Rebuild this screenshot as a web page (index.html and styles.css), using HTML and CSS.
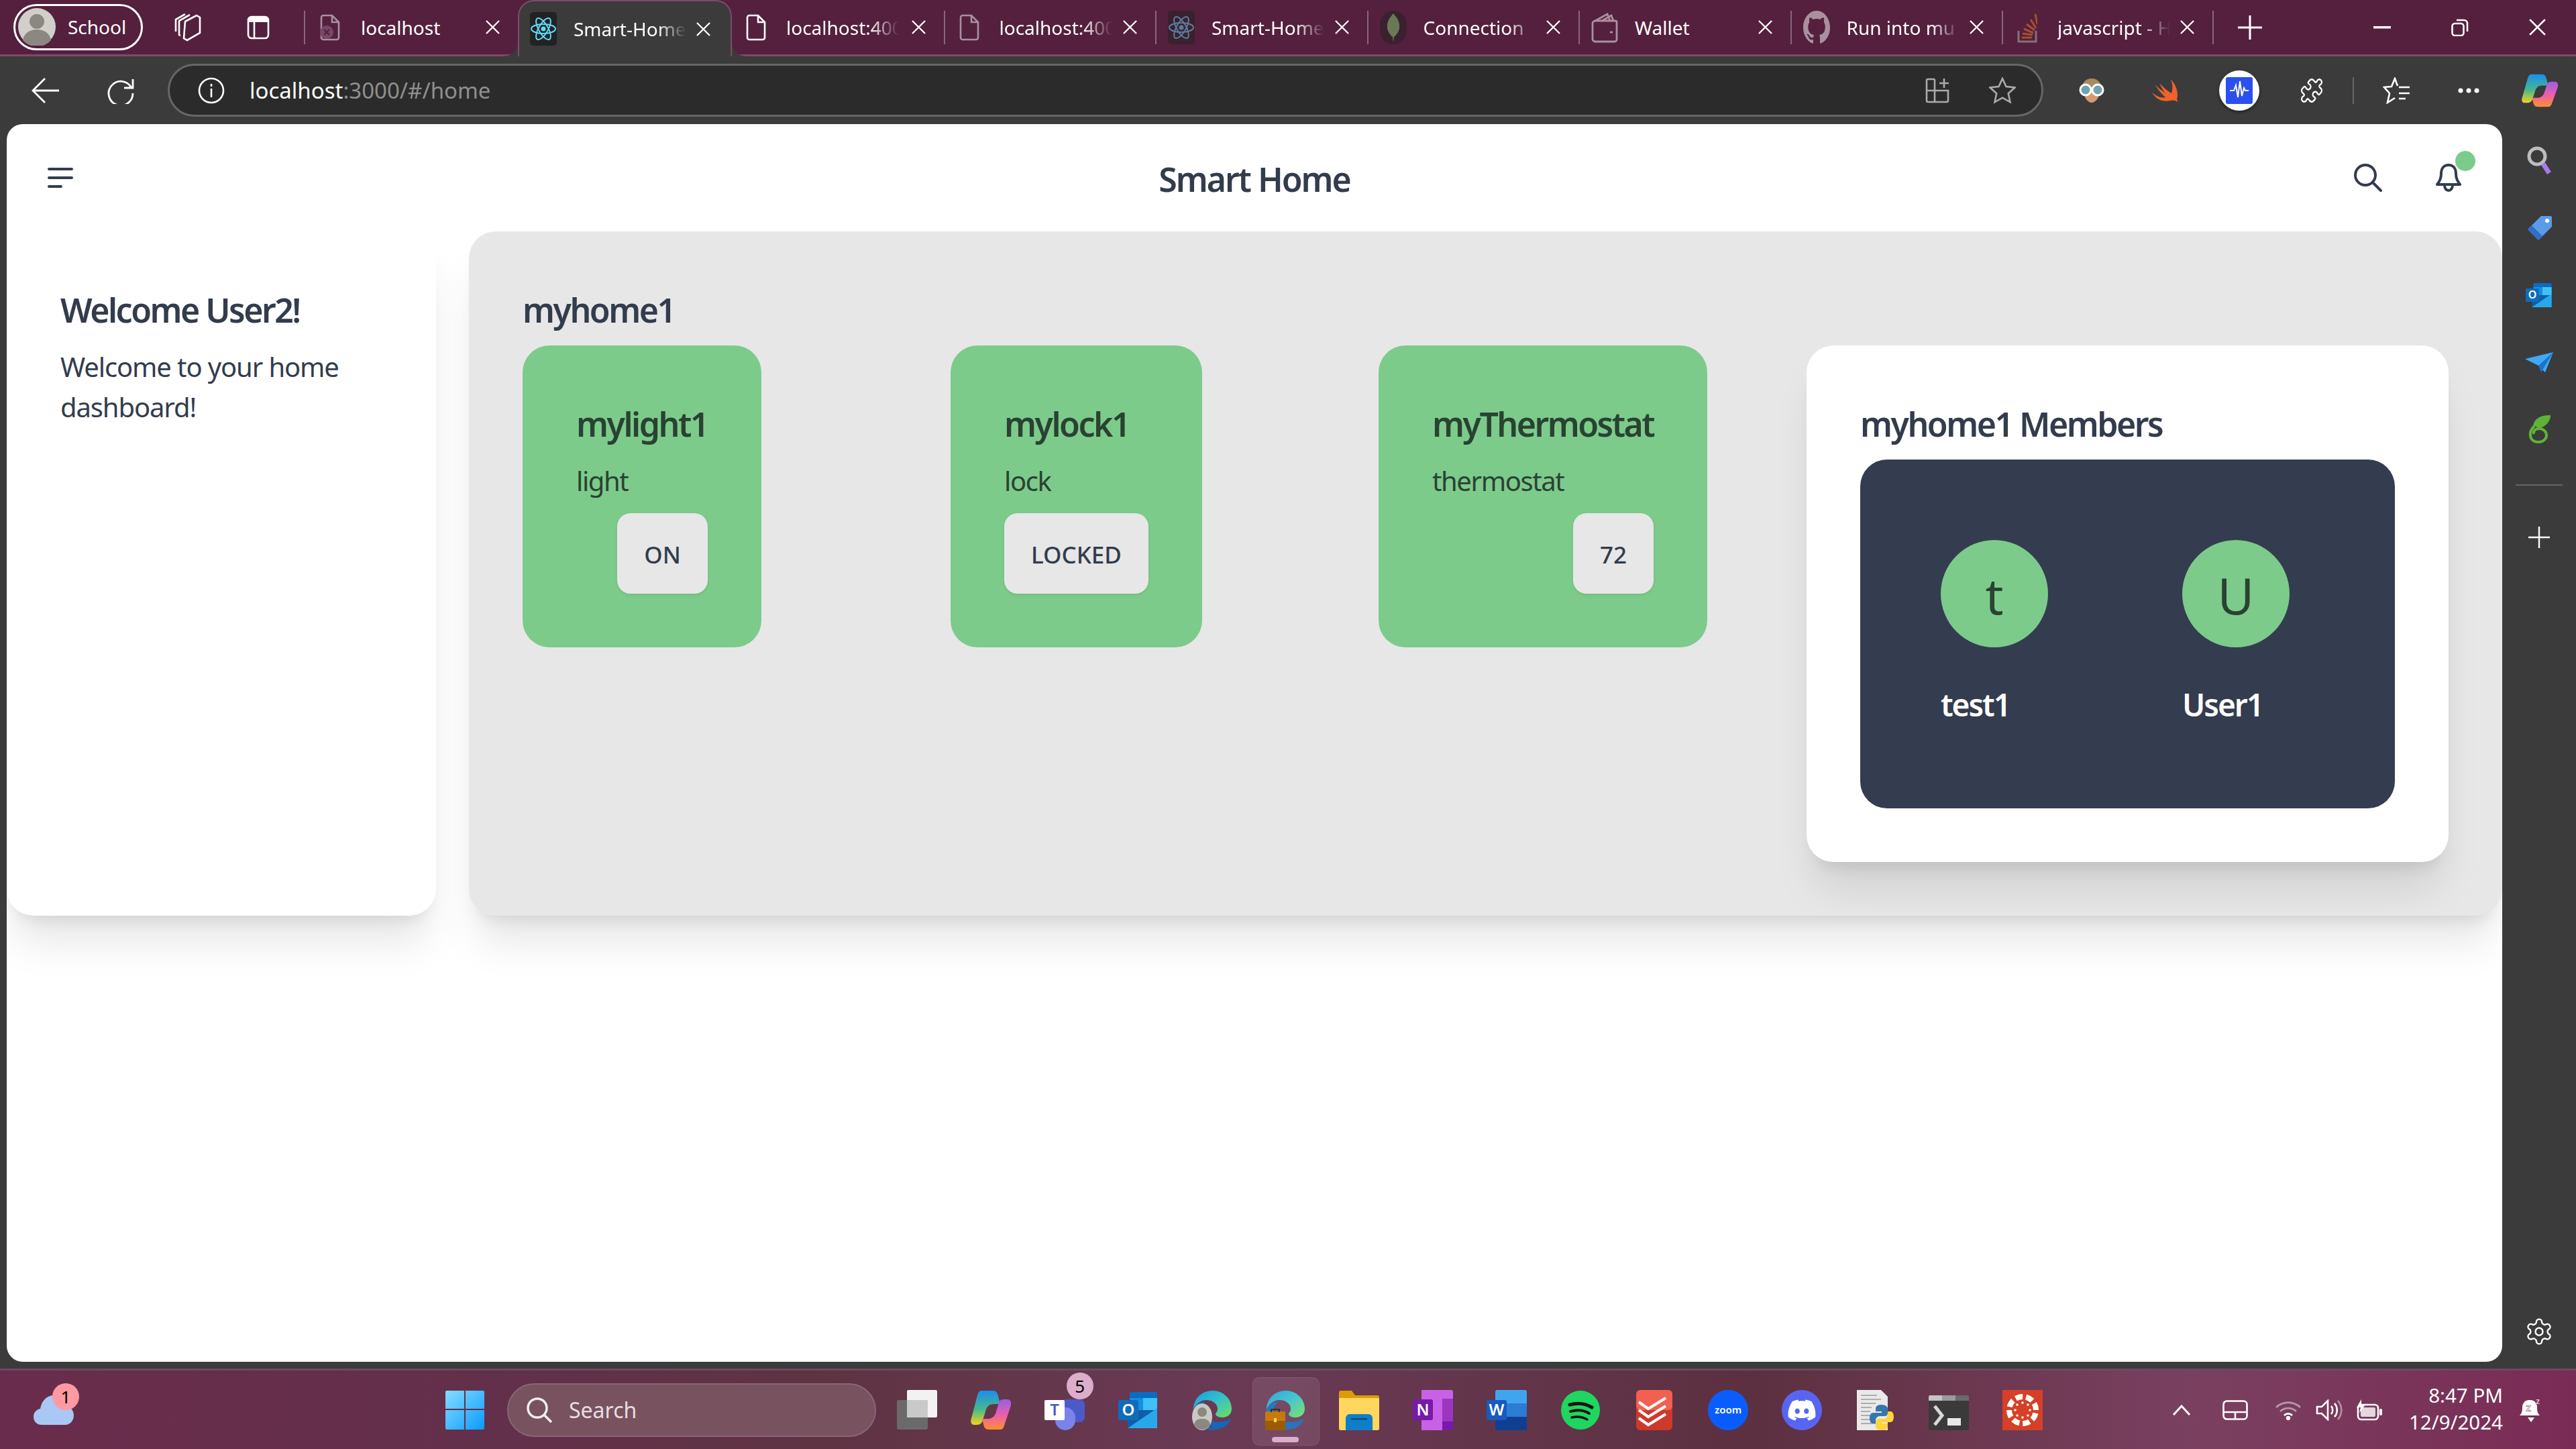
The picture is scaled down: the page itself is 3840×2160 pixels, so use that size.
FILE: index.html
```html
<!DOCTYPE html>
<html lang="en">
<head>
    <meta charset="UTF-8">
    <title>Smart Home</title>
    <link rel="stylesheet" href="styles.css">
</head>
<body>
    <svg class="defs" width="0" height="0">
        <defs>
            <linearGradient id="edgeTop" x1="0" y1="0" x2="1" y2="1">
                <stop offset="0" stop-color="#1b9de2"/><stop offset=".5" stop-color="#35c1c8"/><stop offset="1" stop-color="#6fe05c"/>
            </linearGradient>
            <linearGradient id="copilotA" x1="0" y1="0" x2="0" y2="1">
                <stop offset="0" stop-color="#1b8ef0"/><stop offset=".55" stop-color="#45b98a"/><stop offset="1" stop-color="#f5d21f"/>
            </linearGradient>
            <linearGradient id="copilotB" x1="0" y1="0" x2="0" y2="1">
                <stop offset="0" stop-color="#9b5de5"/><stop offset=".55" stop-color="#f05fa6"/><stop offset="1" stop-color="#f9912f"/>
            </linearGradient>
            <linearGradient id="startG" x1="0" y1="0" x2="1" y2="1">
                <stop offset="0" stop-color="#86dcff"/><stop offset="1" stop-color="#0a9bff"/>
            </linearGradient>
            <symbol id="i-close" viewBox="0 0 22 22"><path d="M1 1l20 20M21 1L1 21" fill="none" stroke="#fff" stroke-width="2.4"/></symbol>
            <symbol id="i-file" viewBox="0 0 30 40"><path d="M2 5a3 3 0 0 1 3-3h13l10 10v23a3 3 0 0 1-3 3H5a3 3 0 0 1-3-3zM18 2v10h10" fill="none" stroke="currentColor" stroke-width="2.6"/></symbol>
            <symbol id="i-react" viewBox="0 0 40 50">
                <rect width="40" height="50" rx="5" fill="#222"/>
                <g fill="none" stroke="#61dafb" stroke-width="2">
                    <ellipse cx="20" cy="25" rx="18" ry="7"/>
                    <ellipse cx="20" cy="25" rx="18" ry="7" transform="rotate(60 20 25)"/>
                    <ellipse cx="20" cy="25" rx="18" ry="7" transform="rotate(120 20 25)"/>
                </g>
                <circle cx="20" cy="25" r="3.5" fill="#61dafb"/>
            </symbol>
            <symbol id="i-copilot" viewBox="0 0 60 60">
                <path d="M16 1h17c5 0 7 3 8 8l3 12H34c-7 0-10 4-12 11l-4 13c-1 4-4 7-9 7H5C1 52-1 48 1 42L10 8c1-4 3-7 6-7z" fill="url(#copilotA)"/>
                <path d="M44 59H27c-5 0-7-3-8-8l-2-8h9c7 0 11-6 12-11l4-13c1-4 4-5 8-5h5c4 0 6 4 5 9l-10 30c-1 4-3 6-6 6z" fill="url(#copilotB)"/>
            </symbol>
            <symbol id="i-edge" viewBox="0 0 60 60">
                <path d="M2 30C2 12 15 1 31 1c15 0 28 12 28 27 0 8-6 13-14 13-6 0-10-3-10-5 0-2 3-3 3-8 0-7-7-13-17-13C12 15 4 22 2 30z" fill="url(#edgeTop)"/>
                <path d="M2 30c3-9 11-13 18-12-5 3-8 8-8 14 0 11 10 24 24 27C17 62 2 48 2 30z" fill="#0f6cbd"/>
                <path d="M36 59c10-1 19-7 22-16-4 2-12 5-20 5-8 0-14-4-16-8 1 10 6 17 14 19z" fill="#1566b8"/>
            </symbol>
            <symbol id="i-outlook" viewBox="0 0 60 60">
                <rect x="17" y="3" width="41" height="54" rx="3" fill="#0a6cc4"/>
                <rect x="37" y="12" width="21" height="18" fill="#3fc1f5"/>
                <rect x="17" y="12" width="20" height="18" fill="#1490df"/>
                <path d="M14 30l44 0v27H14z" fill="#0f5ea8"/>
                <path d="M14 57l44-30v30z" fill="#28a8ea"/>
                <rect x="0" y="15" width="30" height="30" rx="3" fill="#0f6cbd"/>
                <text x="15" y="38" class="icon-letter">O</text>
            </symbol>
        </defs>
    </svg>

    <div class="tabstrip">
        <div class="profile">
            <svg width="56" height="56" viewBox="0 0 56 56"><circle cx="28" cy="28" r="28" fill="#d0cfc9"/><circle cx="28" cy="20" r="11" fill="#8b8882"/><path d="M7 48c2-12 12-16 21-16s19 4 21 16a28 28 0 0 1-42 0z" fill="#8b8882"/></svg>
            <span>School</span>
        </div>
        <svg class="strip-icon workspaces" width="40" height="42" viewBox="0 0 40 42" fill="none" stroke="#fff" stroke-width="2.6"><path d="M16 12l17-9 5 3v23l-19 11-5-3z"/><path d="M9 33L7 32V11L23 2"/><path d="M2 27V9L16 1"/></svg>
        <svg class="strip-icon vertical" width="34" height="36" viewBox="0 0 34 36"><rect x="2" y="2" width="30" height="32" rx="5" fill="none" stroke="#fff" stroke-width="2.6"/><path d="M2 7a5 5 0 0 1 5-5h20a5 5 0 0 1 5 5v3H2z" fill="#fff"/><path d="M11 10v24" stroke="#fff" stroke-width="2.6"/></svg>

        <div class="tab tab-first tab-file">
            <svg class="tab-icon dim" width="32" height="40" viewBox="0 0 30 40"><use href="#i-file"/><circle cx="10" cy="27" r="10" fill="#9a7390"/><path d="M6 23l8 8M14 23l-8 8" stroke="#54203e" stroke-width="2.4"/></svg>
            <span class="tab-title tab-title-full">localhost</span>
            <svg class="tab-close" width="21" height="21"><use href="#i-close"/></svg>
        </div>
        <div class="tab tab-active">
            <svg class="tab-icon" width="40" height="50"><use href="#i-react"/></svg>
            <span class="tab-title">Smart-Home</span>
            <svg class="tab-close" width="21" height="21"><use href="#i-close"/></svg>
        </div>
        <div class="tab tab-plain tab-file">
            <svg class="tab-icon" width="30" height="40"><use href="#i-file"/></svg>
            <span class="tab-title">localhost:400</span>
            <svg class="tab-close" width="21" height="21"><use href="#i-close"/></svg>
        </div>
        <div class="tab tab-file">
            <svg class="tab-icon dim" width="30" height="40"><use href="#i-file"/></svg>
            <span class="tab-title">localhost:400</span>
            <svg class="tab-close" width="21" height="21"><use href="#i-close"/></svg>
        </div>
        <div class="tab">
            <svg class="tab-icon dim" width="40" height="50"><use href="#i-react"/></svg>
            <span class="tab-title">Smart-Home</span>
            <svg class="tab-close" width="21" height="21"><use href="#i-close"/></svg>
        </div>
        <div class="tab">
            <svg class="tab-icon dim" width="40" height="50" viewBox="0 0 40 50"><rect width="40" height="50" rx="20" fill="#222"/><path d="M20 4c7 8 10 14 9 22-1 6-5 11-8 13l-1 8-1-8c-3-2-7-7-8-13-1-8 2-14 9-22z" fill="#7fd06c"/></svg>
            <span class="tab-title">Connection</span>
            <svg class="tab-close" width="21" height="21"><use href="#i-close"/></svg>
        </div>
        <div class="tab">
            <svg class="tab-icon dim" width="40" height="48" viewBox="0 0 40 48" fill="none" stroke="#fff" stroke-width="2.8"><path d="M2 18a4 4 0 0 1 4-4h30a2 2 0 0 1 2 2v26a3 3 0 0 1-3 3H6a4 4 0 0 1-4-4z"/><path d="M6 14L24 4l4 10M16 14l14-8 3 8"/><path d="M28 31h4"/></svg>
            <span class="tab-title tab-title-full">Wallet</span>
            <svg class="tab-close" width="21" height="21"><use href="#i-close"/></svg>
        </div>
        <div class="tab">
            <svg class="tab-icon dim" width="40" height="50" viewBox="0 0 16 16" preserveAspectRatio="none"><path fill="#fff" d="M8 0C3.58 0 0 3.58 0 8c0 3.54 2.29 6.53 5.47 7.59.4.07.55-.17.55-.38 0-.19-.01-.82-.01-1.49-2.01.37-2.53-.49-2.69-.94-.09-.23-.48-.94-.82-1.13-.28-.15-.68-.52-.01-.53.63-.01 1.08.58 1.23.82.72 1.21 1.87.87 2.33.66.07-.52.28-.87.51-1.07-1.78-.2-3.64-.89-3.64-3.95 0-.87.31-1.59.82-2.15-.08-.2-.36-1.02.08-2.12 0 0 .67-.21 2.2.82.64-.18 1.32-.27 2-.27.68 0 1.36.09 2 .27 1.53-1.04 2.2-.82 2.2-.82.44 1.1.16 1.92.08 2.12.51.56.82 1.27.82 2.15 0 3.07-1.87 3.75-3.65 3.95.29.25.54.73.54 1.48 0 1.07-.01 1.93-.01 2.2 0 .21.15.46.55.38A8.013 8.013 0 0016 8c0-4.42-3.58-8-8-8z"/></svg>
            <span class="tab-title">Run into mu</span>
            <svg class="tab-close" width="21" height="21"><use href="#i-close"/></svg>
        </div>
        <div class="tab tab-last tab-file">
            <svg class="tab-icon dim" width="30" height="46" viewBox="0 0 30 46" fill="none"><path d="M2 28v16h26V28" stroke="#bbb" stroke-width="3"/><path d="M7 38h15M8 32l15 2M10 25l14 6M14 18l12 9M20 11l8 13M27 3l3 15" stroke="#f48024" stroke-width="3"/></svg>
            <span class="tab-title">javascript - H</span>
            <svg class="tab-close" width="21" height="21"><use href="#i-close"/></svg>
        </div>
        <svg class="new-tab" width="36" height="36" viewBox="0 0 36 36"><path d="M18 0v36M0 18h36" stroke="#fff" stroke-width="3"/></svg>
        <div class="win-controls">
            <svg width="26" height="4" viewBox="0 0 26 4"><rect width="26" height="3.5" fill="#fff"/></svg>
            <svg width="26" height="26" viewBox="0 0 26 26" fill="none" stroke="#fff" stroke-width="2.6"><rect x="1.5" y="7" width="17" height="18" rx="4"/><path d="M8 2h11a5 5 0 0 1 5 5v12"/></svg>
            <svg width="25" height="25"><use href="#i-close"/></svg>
        </div>
    </div>

    <div class="toolbar">
        <svg class="tool-back" width="42" height="38" viewBox="0 0 42 38" fill="none" stroke="#fff" stroke-width="2.8"><path d="M41 19H2M20 1L2 19l18 18"/></svg>
        <svg class="tool-reload" width="40" height="40" viewBox="0 0 40 40" fill="none" stroke="#fff" stroke-width="2.8"><path d="M36 16A18 18 0 1 0 38 24M38 3v13H25"/></svg>
        <div class="address">
            <svg width="40" height="40" viewBox="0 0 40 40" fill="none" stroke="#fff" stroke-width="2.6"><circle cx="20" cy="20" r="18"/><path d="M20 17v13M20 10v4"/></svg>
            <span class="url"><span class="url-host">localhost</span>:3000/#/home</span>
            <svg class="addr-split" width="36" height="38" viewBox="0 0 36 38" fill="none" stroke="#aaa" stroke-width="2.6"><path d="M14 2H4a2 2 0 0 0-2 2v30a2 2 0 0 0 2 2h28a2 2 0 0 0 2-2V19H2M14 2v34"/><path d="M28 1v14M21 8h14"/></svg>
            <svg class="addr-star" width="40" height="40" viewBox="0 0 40 40" fill="none" stroke="#aaa" stroke-width="2.6"><path d="M20 2l5.5 12 13 1.500-9.700 8.800 2.700 13L20 30.700 8.500 37.300l2.700-13L1.500 15.500l13-1.500z"/></svg>
        </div>
        <div class="extensions">
            <svg width="40" height="36" viewBox="0 0 40 36"><path d="M20 0c9 0 16 7 15 18H5C4 7 11 0 20 0z" fill="#a98a5e"/><path d="M8 18h24c0 10-6 18-12 18S8 28 8 18z" fill="#d79a6f"/><circle cx="11" cy="17" r="8" fill="#6fa3b2" stroke="#fff" stroke-width="3"/><circle cx="29" cy="17" r="8" fill="#6fa3b2" stroke="#fff" stroke-width="3"/></svg>
            <svg width="40" height="34" viewBox="0 0 40 34"><path d="M28 0c8 9 12 20 9 30 1 2 1 3 1 4-3-3-7-3-11-2C15 35 5 29 0 20c6 5 14 9 20 7C14 22 8 14 4 8c5 5 11 9 16 13C16 16 13 11 11 6c5 5 11 11 18 15 2-6 2-13-1-21z" fill="#f0612c"/></svg>
            <div class="ext-badge">
                <svg width="40" height="40" viewBox="0 0 40 40"><rect width="40" height="40" rx="3" fill="#2b50f0"/><path d="M6 20h6l3-8 3 18 3-24 3 22 3-12 2 4h5" fill="none" stroke="#fff" stroke-width="2"/></svg>
            </div>
            <svg width="36" height="40" viewBox="0 0 24 24" preserveAspectRatio="none" fill="none" stroke="#fff" stroke-width="1.500"><path d="M19.439 7.85c-.049.322.059.648.289.878l1.568 1.568c.47.47.706 1.087.706 1.704s-.235 1.233-.706 1.704l-1.611 1.611a.98.98 0 0 1-.837.276c-.47-.07-.802-.48-.968-.925a2.501 2.501 0 1 0-3.214 3.214c.446.166.855.497.925.968a.979.979 0 0 1-.276.837l-1.61 1.61a2.404 2.404 0 0 1-1.705.707 2.402 2.402 0 0 1-1.704-.706l-1.568-1.568a1.026 1.026 0 0 0-.877-.29c-.493.074-.84.504-1.02.968a2.5 2.5 0 1 1-3.237-3.237c.464-.18.894-.527.967-1.02a1.026 1.026 0 0 0-.289-.877l-1.568-1.568A2.402 2.402 0 0 1 1.998 12c0-.617.236-1.234.706-1.704L4.23 8.77c.24-.24.581-.353.917-.303.515.077.877.528 1.073 1.01a2.5 2.5 0 1 0 3.259-3.259c-.482-.196-.933-.558-1.01-1.073-.05-.336.062-.676.303-.917l1.525-1.525A2.402 2.402 0 0 1 12 1.998c.617 0 1.234.236 1.704.706l1.568 1.568c.23.23.556.338.877.29.493-.074.84-.504 1.02-.968a2.5 2.5 0 1 1 3.237 3.237c-.464.18-.894.527-.967 1.02Z"/></svg>
            <span class="tool-sep"></span>
            <svg width="42" height="40" viewBox="0 0 42 40" fill="none" stroke="#fff" stroke-width="2.6"><path d="M22 13l-4-11-5 12-11 1 8 9-3 14 11-7M24 15h16M24 24h16M24 32h10"/></svg>
            <svg width="32" height="8" viewBox="0 0 32 8"><circle cx="4" cy="4" r="3.500" fill="#fff"/><circle cx="16" cy="4" r="3.500" fill="#fff"/><circle cx="28" cy="4" r="3.500" fill="#fff"/></svg>
            <svg class="ext-copilot" width="54" height="50" viewBox="0 0 60 60" preserveAspectRatio="none"><use href="#i-copilot"/></svg>
        </div>
    </div>

    <div class="workspace">
        <div class="viewport">
            <div class="navbar">
                <div class="nav-side">
                    <button class="icon-btn" type="button">
                        <svg width="38" height="30" viewBox="0 0 38 30" fill="none" stroke="#333c4d" stroke-width="4" stroke-linecap="round"><path d="M2 2h34M2 15h34M2 28h18"/></svg>
                    </button>
                </div>
                <div class="nav-title">Smart Home</div>
                <div class="nav-side nav-side-right">
                    <button class="icon-btn" type="button">
                        <svg width="42" height="42" viewBox="0 0 42 42" fill="none" stroke="#333c4d" stroke-width="4" stroke-linecap="round"><circle cx="17" cy="17" r="15"/><path d="M28 28l12 12"/></svg>
                    </button>
                    <button class="icon-btn" type="button">
                        <svg width="38" height="42" viewBox="0 0 38 42" fill="none" stroke="#333c4d" stroke-width="4" stroke-linejoin="round"><path d="M19 2c8 0 11 6 11 13 0 7 2 11 6 16H2c4-5 6-9 6-16C8 8 11 2 19 2zM13 32c0 5 3 8 6 8s6-3 6-8"/></svg>
                        <span class="bell-dot"></span>
                    </button>
                </div>
            </div>

            <div class="dashboard">
                <div class="welcome-card">
                    <h2 class="card-title">Welcome User2!</h2>
                    <p class="welcome-text">Welcome to your home dashboard!</p>
                </div>
                <div class="home-panel">
                    <h2 class="card-title">myhome1</h2>
                    <div class="home-grid">
                        <div class="device-card">
                            <h2 class="card-title">mylight1</h2>
                            <p class="device-type">light</p>
                            <div class="device-actions"><button class="device-btn" type="button">ON</button></div>
                        </div>
                        <div class="device-card">
                            <h2 class="card-title">mylock1</h2>
                            <p class="device-type">lock</p>
                            <div class="device-actions"><button class="device-btn" type="button">LOCKED</button></div>
                        </div>
                        <div class="device-card">
                            <h2 class="card-title">myThermostat</h2>
                            <p class="device-type">thermostat</p>
                            <div class="device-actions"><button class="device-btn" type="button">72</button></div>
                        </div>
                        <div class="members-card">
                            <h2 class="card-title">myhome1 Members</h2>
                            <div class="members-box">
                                <div class="member">
                                    <div class="avatar">t</div>
                                    <div class="member-name">test1</div>
                                </div>
                                <div class="member">
                                    <div class="avatar">U</div>
                                    <div class="member-name">User1</div>
                                </div>
                            </div>
                        </div>
                    </div>
                </div>
            </div>
        </div>

        <div class="sidebar">
            <div class="side-item"><svg width="36" height="44" viewBox="0 0 36 44" fill="none"><circle cx="15" cy="15" r="12" stroke="#bdbdbd" stroke-width="5"/><path d="M24 26l9 14" stroke="#a87be8" stroke-width="7"/></svg></div>
            <div class="side-item"><svg width="42" height="40" viewBox="0 0 42 40"><path d="M24 2h14a2 2 0 0 1 2 2v14L20 38 4 22z" fill="#5b9be8"/><path d="M4 22l16 16 6-6L10 16z" fill="#2f6fc4"/><circle cx="33" cy="9" r="3" fill="#fff"/></svg></div>
            <div class="side-item"><svg width="40" height="40" viewBox="0 0 60 60"><use href="#i-outlook"/></svg></div>
            <div class="side-item"><svg width="42" height="30" viewBox="0 0 42 30"><path d="M0 10L42 0 30 30 20 20z" fill="#3fa9f5"/><path d="M20 20l22-20-18 30z" fill="#1b74c9"/></svg></div>
            <div class="side-item"><svg width="34" height="42" viewBox="0 0 34 42" fill="none" stroke="#5fb336" stroke-width="4"><path d="M10 16C5 21 3 26 4 31c1 6 6 9 12 9s12-4 12-10-5-10-11-10-9 4-8 8"/><path d="M10 16C12 6 20 2 32 2c-2 9-8 14-18 16" fill="#5fb336"/></svg></div>
            <span class="sidebar-sep"></span>
            <div class="side-item"><svg width="32" height="32" viewBox="0 0 32 32"><path d="M16 0v32M0 16h32" stroke="#fff" stroke-width="2.4"/></svg></div>
            <svg class="sidebar-gear" width="44" height="44" viewBox="0 0 24 24" fill="none" stroke="#fff" stroke-width="1.300"><path d="M12.220 2h-.44a2 2 0 0 0-2 2v.18a2 2 0 0 1-1 1.730l-.43.25a2 2 0 0 1-2 0l-.15-.08a2 2 0 0 0-2.730.73l-.22.38a2 2 0 0 0 .73 2.730l.15.1a2 2 0 0 1 1 1.720v.51a2 2 0 0 1-1 1.740l-.15.09a2 2 0 0 0-.73 2.730l.22.38a2 2 0 0 0 2.730.73l.15-.08a2 2 0 0 1 2 0l.43.25a2 2 0 0 1 1 1.730V20a2 2 0 0 0 2 2h.44a2 2 0 0 0 2-2v-.18a2 2 0 0 1 1-1.730l.43-.25a2 2 0 0 1 2 0l.15.08a2 2 0 0 0 2.730-.73l.22-.39a2 2 0 0 0-.73-2.730l-.15-.08a2 2 0 0 1-1-1.740v-.5a2 2 0 0 1 1-1.740l.15-.09a2 2 0 0 0 .73-2.730l-.22-.38a2 2 0 0 0-2.730-.73l-.15.08a2 2 0 0 1-2 0l-.43-.25a2 2 0 0 1-1-1.730V4a2 2 0 0 0-2-2z"/><circle cx="12" cy="12" r="3"/></svg>
        </div>
    </div>

    <div class="taskbar">
        <div class="weather">
            <svg width="60" height="44" viewBox="0 0 60 44"><path d="M12 44C4 44 0 38 0 32s4-11 10-12C12 8 20 0 30 0c9 0 16 6 18 15 7 1 12 8 12 15s-5 14-13 14z" fill="#a9c8f5"/></svg>
            <span class="task-badge weather-badge">1</span>
        </div>
        <svg class="start" width="58" height="58" viewBox="0 0 58 58"><path d="M2 0h26v27H0V2a2 2 0 0 1 2-2zM30 0h26a2 2 0 0 1 2 2v25H30zM0 29h28v29H2a2 2 0 0 1-2-2zM30 29h28v27a2 2 0 0 1-2 2H30z" fill="url(#startG)"/></svg>
        <div class="task-search">
            <svg width="40" height="40" viewBox="0 0 40 40" fill="none" stroke="#eee" stroke-width="3.500"><circle cx="17" cy="17" r="14"/><path d="M27 27l11 11"/></svg>
            <span>Search</span>
        </div>
        <div class="task-apps">
            <svg width="60" height="60" viewBox="0 0 60 60"><rect x="0" y="15" width="46" height="44" rx="3" fill="#6a6a6a"/><rect x="15" y="0" width="45" height="41" rx="2" fill="#f2f2f2"/><rect x="15" y="15" width="31" height="26" fill="#c9c9c9"/></svg>
            <svg width="60" height="60"><use href="#i-copilot"/></svg>
            <div class="task-app">
                <svg width="60" height="60" viewBox="0 0 60 60"><rect x="24" y="14" width="36" height="34" rx="8" fill="#4c5ac8"/><rect x="16" y="26" width="30" height="34" rx="15" fill="#7b83eb"/><rect x="0" y="15" width="30" height="30" rx="2" fill="#fff"/><text x="15" y="38" class="icon-letter icon-letter-blue">T</text></svg>
                <span class="task-badge teams-badge">5</span>
            </div>
            <svg width="60" height="60"><use href="#i-outlook"/></svg>
            <div class="task-app">
                <svg width="60" height="60"><use href="#i-edge"/></svg>
                <svg class="edge-overlay" width="30" height="40" viewBox="0 0 30 40"><ellipse cx="15" cy="20" rx="15" ry="20" fill="#c9c9c4"/><circle cx="15" cy="13" r="7" fill="#8b8882"/><path d="M3 32c1-8 7-9 12-9s11 1 12 9a15 18 0 0 1-24 0z" fill="#8b8882"/></svg>
            </div>
            <div class="task-app task-app-active">
                <svg width="60" height="60"><use href="#i-edge"/></svg>
                <svg class="edge-overlay" width="30" height="32" viewBox="0 0 30 32"><rect y="4" width="30" height="28" rx="2" fill="#c67a0b"/><rect y="18" width="30" height="14" fill="#9c5c05"/><path d="M9 5V1h12v4" fill="none" stroke="#333" stroke-width="2"/><rect x="13" y="14" width="4" height="6" fill="#f6d55c"/></svg>
            </div>
            <svg width="60" height="60" viewBox="0 0 60 60"><path d="M0 4a3 3 0 0 1 3-3h16l5 7h33a3 3 0 0 1 3 3v46a3 3 0 0 1-3 3H3a3 3 0 0 1-3-3z" fill="#dd9c05"/><path d="M0 12h57a3 3 0 0 1 3 3v42a3 3 0 0 1-3 3H3a3 3 0 0 1-3-3z" fill="#ffd75e"/><path d="M10 60V42a6 6 0 0 1 6-6h28a6 6 0 0 1 6 6v18z" fill="#0f7ec9"/><rect x="18" y="42" width="24" height="2.500" fill="#0b4f83"/></svg>
            <svg width="60" height="60" viewBox="0 0 60 60"><path d="M13 0h44a3 3 0 0 1 3 3v54a3 3 0 0 1-3 3H13z" fill="#c961e6"/><rect x="44" y="13" width="16" height="34" fill="#9c35c0"/><rect x="44" y="47" width="16" height="13" fill="#7719aa"/><rect x="0" y="14" width="30" height="31" rx="3" fill="#7719aa"/><text x="15" y="38" class="icon-letter">N</text></svg>
            <svg width="60" height="60" viewBox="0 0 60 60"><path d="M13 3a3 3 0 0 1 3-3h41a3 3 0 0 1 3 3v17H13z" fill="#41a5ee"/><rect x="13" y="20" width="47" height="20" fill="#2b7cd3"/><path d="M13 40h47v17a3 3 0 0 1-3 3H16a3 3 0 0 1-3-3z" fill="#103f91"/><rect x="0" y="15" width="30" height="30" rx="3" fill="#185abd"/><text x="15" y="38" class="icon-letter">W</text></svg>
            <svg width="60" height="60" viewBox="0 0 60 60"><circle cx="30" cy="30" r="29" fill="#1ed760"/><g fill="none" stroke="#191414" stroke-linecap="round"><path d="M14 22c11-3 23-2 33 4" stroke-width="5"/><path d="M15 32c10-3 20-2 28 3" stroke-width="4"/><path d="M17 41c8-2 16-1 23 3" stroke-width="3.500"/></g></svg>
            <svg class="task-todoist" width="54" height="60" viewBox="0 0 54 60"><rect y="1" width="54" height="59" rx="6" fill="#cd3a2a"/><rect width="54" height="30" rx="6" fill="#f2604f"/><g fill="none" stroke="#fff" stroke-width="4"><path d="M4 18l14 10 26-16"/><path d="M4 30l14 10 26-16"/><path d="M4 42l14 10 26-16"/></g></svg>
            <svg width="60" height="60" viewBox="0 0 60 60"><circle cx="30" cy="30" r="30" fill="#0b5cff"/><text x="30" y="35" class="zoom-text">zoom</text></svg>
            <svg width="60" height="60" viewBox="0 0 60 60"><circle cx="30" cy="30" r="30" fill="#5865f2"/><path transform="translate(9.600 9.600) scale(1.700)" fill="#fff" d="M20.317 4.3698a19.7913 19.7913 0 00-4.8851-1.5152.0741.0741 0 00-.0785.0371c-.211.3753-.4447.8648-.6083 1.2495-1.8447-.2762-3.68-.2762-5.4868 0-.1636-.3933-.4058-.8742-.6177-1.2495a.077.077 0 00-.0785-.037 19.7363 19.7363 0 00-4.8852 1.515.0699.0699 0 00-.0321.0277C.5334 9.0458-.319 13.5799.0992 18.0578a.0824.0824 0 00.0312.0561c2.0528 1.5076 4.0413 2.4228 5.9929 3.0294a.0777.0777 0 00.0842-.0276c.4616-.6304.8731-1.2952 1.226-1.9942a.076.076 0 00-.0416-.1057c-.6528-.2476-1.2743-.5495-1.8722-.8923a.077.077 0 01-.0076-.1277c.1258-.0943.2517-.1923.3718-.2914a.0743.0743 0 01.0776-.0105c3.9278 1.7933 8.18 1.7933 12.0614 0a.0739.0739 0 01.0785.0095c.1202.099.246.1981.3728.2924a.077.077 0 01-.0066.1276 12.2986 12.2986 0 01-1.873.8914.0766.0766 0 00-.0407.1067c.3604.698.7719 1.3628 1.225 1.9932a.076.076 0 00.0842.0286c1.961-.6067 3.9495-1.5219 6.0023-3.0294a.077.077 0 00.0313-.0552c.5004-5.177-.8382-9.6739-3.5485-13.6604a.061.061 0 00-.0312-.0286zM8.02 15.3312c-1.1825 0-2.1569-1.0857-2.1569-2.419 0-1.3332.9555-2.4189 2.157-2.4189 1.2108 0 2.1757 1.0952 2.1568 2.419 0 1.3332-.9555 2.4189-2.1569 2.4189zm7.9748 0c-1.1825 0-2.1569-1.0857-2.1569-2.419 0-1.3332.9554-2.4189 2.1569-2.4189 1.2108 0 2.1757 1.0952 2.1568 2.419 0 1.3332-.946 2.4189-2.1568 2.4189Z"/></svg>
            <svg width="60" height="60" viewBox="0 0 60 60"><path d="M2 0h36l10 10v50H2z" fill="#e9e9e9"/><g stroke="#9a9a9a" stroke-width="1.500"><path d="M8 8h24M8 14h30M8 20h22M8 26h16M8 32h14M8 38h16M8 44h20M8 50h24"/></g><path d="M38 22c-6 0-8 3-8 6v4h9v2H26c-3 0-5 3-5 8s2 8 5 8h4v-5c0-3 3-6 6-6h8c2 0 4-2 4-4v-7c0-3-3-6-10-6z" fill="#3776ab"/><path d="M40 60c6 0 8-3 8-6v-4h-9v-2h13c3 0 5-3 5-8s-2-8-5-8h-4v5c0 3-3 6-6 6h-8c-2 0-4 2-4 4v7c0 3 3 6 10 6z" fill="#ffd43b"/></svg>
            <svg width="60" height="60" viewBox="0 0 60 60"><rect y="8" width="60" height="52" rx="2" fill="#3a3a3a"/><path d="M0 10a2 2 0 0 1 2-2h18v8H0z" fill="#c4c4c4"/><rect x="20" y="8" width="20" height="8" fill="#9a9a9a"/><path d="M40 8h18a2 2 0 0 1 2 2v6H40z" fill="#6a6a6a"/><path d="M9 24l11 14-11 14" fill="none" stroke="#d8d8d8" stroke-width="5"/><rect x="28" y="42" width="20" height="11" fill="#e8e8e8"/></svg>
            <svg width="60" height="60" viewBox="0 0 60 60"><rect width="60" height="60" fill="#d64027"/><circle cx="30" cy="30" r="20" fill="none" stroke="#fff" stroke-width="8" stroke-dasharray="10.700 5" stroke-dashoffset="-36"/><g fill="#fff"><circle cx="30" cy="19" r="1.800"/><circle cx="30" cy="41" r="1.800"/><circle cx="19" cy="30" r="1.800"/><circle cx="41" cy="30" r="1.800"/><circle cx="22" cy="22" r="1.800"/><circle cx="38" cy="22" r="1.800"/><circle cx="22" cy="38" r="1.800"/><circle cx="38" cy="38" r="1.800"/></g></svg>
        </div>
        <div class="tray">
            <svg class="tray-caret" width="28" height="16" viewBox="0 0 28 16" fill="none" stroke="#fff" stroke-width="3"><path d="M2 15L14 2l12 13"/></svg>
            <svg class="tray-pad" width="38" height="30" viewBox="0 0 38 30" fill="none" stroke="#fff" stroke-width="2.6"><rect x="1.500" y="1.500" width="35" height="27" rx="5"/><path d="M1.500 18h35M19 18v10"/></svg>
            <svg class="tray-wifi" width="40" height="30" viewBox="0 0 40 30" fill="none" stroke="#fff" stroke-width="2.800"><path d="M2 11a26 26 0 0 1 36 0" opacity=".45"/><path d="M8 17a17 17 0 0 1 24 0" opacity=".45"/><path d="M14 23a8 8 0 0 1 12 0"/><circle cx="20" cy="27" r="1.800" fill="#fff"/></svg>
            <svg class="tray-vol" width="40" height="32" viewBox="0 0 40 32" fill="none" stroke="#fff" stroke-width="2.600"><path d="M2 11h7l9-9v28l-9-9H2z"/><path d="M23 10c3 3 3 9 0 12M28 6c5 5 5 15 0 20"/><path d="M33 2c7 8 7 20 0 28" opacity=".45"/></svg>
            <svg class="tray-batt" width="40" height="32" viewBox="0 0 40 32"><rect x="3" y="8" width="30" height="22" rx="5" fill="none" stroke="#fff" stroke-width="2.600"/><rect x="7" y="12" width="22" height="14" rx="2" fill="#fff" opacity=".8"/><rect x="35" y="14" width="4" height="10" rx="2" fill="#fff"/><path d="M8 0L1 12h6l-2 8 9-12H8z" fill="#fff"/></svg>
            <div class="clock">
                <span>8:47 PM</span>
                <span>12/9/2024</span>
            </div>
            <svg class="tray-bell" width="34" height="50" viewBox="0 -12 34 50"><path d="M13 4c-6 1-9 5-9 11 0 6-1 9-4 12h30c-3-3-4-6-4-12 0-6-3-10-9-11z" fill="#fff"/><path d="M12 30h10l-5 7z" fill="#fff"/><text x="13" y="21" class="bell-z">Z</text><text x="27" y="10" class="bell-z">z</text></svg>
        </div>
    </div>
</body>
</html>
```

FILE: styles.css
```css
/* Ventana del navegador y barra de tareas */

* {
    box-sizing: border-box;
}

body {
    font-family: "Noto Sans", "Open Sans", sans-serif;
    background-color: #3b3b3b;
    margin: 0;
    width: 3840px;
    height: 2160px;
    overflow: hidden;
    display: flex;
    flex-direction: column;
    color: #333c4d;
}

.defs {
    display: block;
    height: 0;
}

svg {
    flex-shrink: 0;
}

.icon-letter {
    font-family: "Noto Sans", sans-serif;
    font-size: 24px;
    font-weight: 600;
    fill: #fff;
    text-anchor: middle;
}

.icon-letter-blue {
    fill: #4c5ac8;
}

.zoom-text {
    font-family: "Noto Sans", sans-serif;
    font-size: 15px;
    font-weight: 600;
    fill: #fff;
    text-anchor: middle;
}

.bell-z {
    font-family: "Noto Sans", sans-serif;
    font-size: 13px;
    font-weight: 700;
    fill: #fff;
    text-anchor: middle;
    stroke: #6f2d52;
    stroke-width: .5px;
}

/* Pestañas */

.tabstrip {
    height: 84px;
    background-color: #54203e;
    display: flex;
    align-items: center;
    padding-left: 20px;
    color: white;
    border-bottom: 3px solid #7c4c69;
}

.profile {
    width: 193px;
    height: 69px;
    border: 3px solid white;
    border-radius: 35px;
    display: flex;
    align-items: center;
    gap: 18px;
    padding-left: 4px;
    font-size: 28px;
    margin-top: -1px;
}

.strip-icon.workspaces {
    margin-left: 47px;
}

.strip-icon.vertical {
    margin-left: 68px;
    margin-right: 51px;
}

.tab {
    width: 315.5px;
    height: 50px;
    display: flex;
    align-items: center;
    gap: 25px;
    padding: 0 27px 0 17px;
    border-left: 2px solid #8a6580;
    font-size: 28px;
    position: relative;
}

.tab-file {
    gap: 30px;
    padding-left: 21px;
}

.tab-first {
    width: 319px;
}

.tab-active {
    width: 319px;
    height: 84px;
    margin-top: 3px;
    padding-left: 16px;
    padding-right: 30px;
    border: 2px solid #7c4c69;
    border-bottom: 0;
    border-radius: 24px 24px 0 0;
    background-color: #3b3b3b;
    z-index: 1;
}

.tab-active::before,
.tab-active::after {
    content: "";
    position: absolute;
    bottom: 0;
    width: 20px;
    height: 20px;
}

.tab-active::before {
    left: -22px;
    background: radial-gradient(circle at 0 0, transparent 19px, #3b3b3b 20px);
}

.tab-active::after {
    right: -22px;
    background: radial-gradient(circle at 100% 0, transparent 19px, #3b3b3b 20px);
}

.tab-plain {
    border-left: 0;
}

.tab-last {
    border-right: 2px solid #8a6580;
}

.tab-icon {
    width: auto;
    color: white;
}

.tab-icon.dim {
    opacity: .5;
}

.tab-close {
    margin-left: -18px;
}

.tab-file .tab-close {
    margin-left: -23px;
}

.tab-title {
    flex: 1;
    min-width: 0;
    white-space: nowrap;
    -webkit-mask-image: linear-gradient(to right, black 125px, transparent 168px);
    mask-image: linear-gradient(to right, black 125px, transparent 168px);
}

.tab-title-full {
    -webkit-mask-image: none;
    mask-image: none;
}

.new-tab {
    margin-left: 36px;
}

.win-controls {
    margin-left: auto;
    display: flex;
    align-items: center;
    gap: 90px;
    padding-right: 45px;
}

/* Barra de herramientas */

.toolbar {
    height: 101px;
    background-color: #3b3b3b;
    display: flex;
    align-items: center;
    border-radius: 24px 24px 0 0;
    padding-left: 47px;
}

.tool-reload {
    margin-left: 71px;
    margin-right: 50px;
}

.address {
    width: 2796px;
    height: 79px;
    background-color: #2b2b2b;
    border: 3px solid #666;
    border-radius: 40px;
    display: flex;
    align-items: center;
    padding-left: 42px;
    padding-right: 38px;
}

.url {
    margin-left: 37px;
    font-size: 33px;
    color: #8f8f8f;
    flex: 1;
}

.url-host {
    color: white;
}

.addr-star {
    margin-left: 59px;
}

.extensions {
    display: flex;
    align-items: center;
    gap: 70px;
    margin-left: 52px;
}

.ext-badge {
    width: 60px;
    height: 60px;
    border-radius: 50%;
    background-color: white;
    display: flex;
    align-items: center;
    justify-content: center;
    margin: 0 -10px;
    box-shadow: 0 2px 4px rgba(0,0,0,0.5);
}

.ext-copilot {
    margin-left: -7px;
}

.tool-sep {
    width: 2px;
    height: 40px;
    background-color: #666;
    margin: 0 -27px;
}

/* Página */

.workspace {
    flex: 1;
    min-height: 0;
    display: flex;
    padding-left: 10px;
}

.viewport {
    flex: 1;
    min-width: 0;
    margin-bottom: 10px;
    background-color: white;
    border-radius: 24px;
    overflow: hidden;
}

.navbar {
    height: 160px;
    display: flex;
    align-items: center;
    padding: 0 20px;
}

.nav-side {
    flex: 1;
    display: flex;
}

.nav-side-right {
    justify-content: flex-end;
}

.icon-btn {
    width: 120px;
    height: 120px;
    border: 0;
    padding: 0;
    background: none;
    display: flex;
    align-items: center;
    justify-content: center;
    position: relative;
}

.bell-dot {
    position: absolute;
    top: 20px;
    right: 20px;
    width: 30px;
    height: 30px;
    border-radius: 50%;
    background-color: #7ccb8b;
}

.nav-title {
    padding-top: 3px;
    font-size: 50px;
    font-weight: 600;
    line-height: 74px;
    letter-spacing: -.04em;
}

.dashboard {
    display: flex;
    gap: 49px;
}

.welcome-card {
    width: 640px;
    padding: 80px;
    border-radius: 40px;
    background-color: white;
    box-shadow: 0 50px 62px -12px rgba(0,0,0,0.1), 0 20px 25px -15px rgba(0,0,0,0.1);
}

.card-title {
    margin: 0 0 16px;
    font-size: 50px;
    font-weight: 600;
    line-height: 74px;
    letter-spacing: -.05em;
}

.welcome-text {
    margin: 0;
    padding-top: 2px;
    font-size: 40px;
    line-height: 60px;
    letter-spacing: -.028em;
}

.home-panel {
    flex: 1;
    min-width: 0;
    padding: 80px;
    border-radius: 40px;
    background-color: #e7e7e7;
    box-shadow: 0 50px 62px -12px rgba(0,0,0,0.1), 0 20px 25px -15px rgba(0,0,0,0.1);
}

.home-grid {
    display: grid;
    grid-template-columns: repeat(3, 2fr) 3fr;
    align-items: start;
    justify-items: start;
}

.device-card {
    padding: 80px;
    border-radius: 40px;
    background-color: #7ccb8b;
    color: #2a4232;
}

.device-type {
    margin: 0 0 18px;
    padding-top: 2px;
    font-size: 40px;
    line-height: 60px;
    letter-spacing: -.035em;
}

.device-actions {
    display: flex;
    justify-content: flex-end;
}

.device-btn {
    height: 120px;
    padding: 2px 40px 0;
    border: 0;
    border-radius: 20px;
    background-color: #e7e7e7;
    color: #333c4d;
    font-family: inherit;
    font-size: 35px;
    font-weight: 500;
    box-shadow: 0 2px 4px rgba(0,0,0,0.08);
}

.members-card {
    width: 100%;
    padding: 80px;
    border-radius: 40px;
    background-color: white;
    box-shadow: 0 50px 62px -12px rgba(0,0,0,0.1), 0 20px 25px -15px rgba(0,0,0,0.1);
}

.members-box {
    padding: 120px;
    border-radius: 40px;
    background-color: #343c4f;
    display: flex;
    gap: 200px;
}

.member {
    width: 160px;
    display: flex;
    flex-direction: column;
    gap: 50px;
}

.avatar {
    width: 160px;
    height: 160px;
    padding-top: 4px;
    border-radius: 50%;
    background-color: #7ccb8b;
    color: #2a4232;
    font-size: 75px;
    display: flex;
    align-items: center;
    justify-content: center;
}

.member-name {
    color: white;
    font-size: 46px;
    font-weight: 600;
    line-height: 70px;
    letter-spacing: -.045em;
}

/* Barra lateral */

.sidebar {
    width: 110px;
    display: flex;
    flex-direction: column;
    align-items: center;
    padding-top: 5px;
    padding-bottom: 33px;
}

.side-item {
    height: 100px;
    display: flex;
    align-items: center;
}

.sidebar-sep {
    width: 70px;
    height: 2px;
    background-color: #666;
    margin-top: 32px;
    margin-bottom: 27px;
}

.sidebar-gear {
    margin-top: auto;
}

/* Barra de tareas */

.taskbar {
    height: 120px;
    border-top: 3px solid #6b4a5f;
    background: linear-gradient(to right, #6a2c4c 0%, #62304a 20%, #5f3342 32%, #6a3a55 48%, #5c3040 68%, #7a4060 85%, #7a2b55 100%);
    display: flex;
    align-items: center;
    padding-left: 50px;
    color: white;
}

.weather {
    width: 60px;
    margin-right: 554px;
    position: relative;
    display: flex;
}

.task-badge {
    position: absolute;
    width: 40px;
    height: 40px;
    border-radius: 50%;
    color: black;
    font-size: 26px;
    line-height: 40px;
    text-align: center;
}

.weather-badge {
    top: -18px;
    left: 28px;
    background-color: #ff9aa2;
}

.teams-badge {
    top: -26px;
    left: 33px;
    background-color: #dcaecb;
}

.task-search {
    width: 550px;
    height: 80px;
    margin-left: 34px;
    border-radius: 40px;
    border: 2px solid #8a6579;
    background-color: #78525f;
    display: flex;
    align-items: center;
    gap: 24px;
    padding-left: 26px;
    font-size: 32px;
    color: #e8dde2;
}

.task-apps {
    display: flex;
    align-items: center;
    gap: 49.9px;
    margin-left: 31px;
}

.task-app {
    width: 60px;
    height: 60px;
    position: relative;
}

.task-app > svg {
    display: block;
}

.task-todoist {
    margin: 0 3px;
}

.edge-overlay {
    position: absolute;
    left: 0;
    bottom: 0;
}

.task-app-active::before {
    content: "";
    position: absolute;
    top: -19px;
    left: -19px;
    width: 98px;
    height: 100px;
    border-radius: 10px;
    background-color: rgba(255,255,255,0.09);
    border: 1px solid rgba(255,255,255,0.08);
}

.task-app-active::after {
    content: "";
    position: absolute;
    top: 70px;
    left: 10px;
    width: 40px;
    height: 8px;
    border-radius: 4px;
    background-color: #dcaecb;
}

.tray {
    margin-left: auto;
    display: flex;
    align-items: center;
    padding-right: 50px;
}

.tray-pad {
    margin-left: 47px;
}

.tray-wifi {
    margin-left: 40px;
}

.tray-vol {
    margin-left: 21px;
}

.tray-batt {
    margin-left: 20px;
}

.clock {
    margin-left: 39px;
    padding-bottom: 3px;
    display: flex;
    flex-direction: column;
    align-items: flex-end;
    font-size: 29.5px;
    line-height: 40px;
}

.tray-bell {
    margin-left: 25px;
    margin-bottom: 12px;
}
```
